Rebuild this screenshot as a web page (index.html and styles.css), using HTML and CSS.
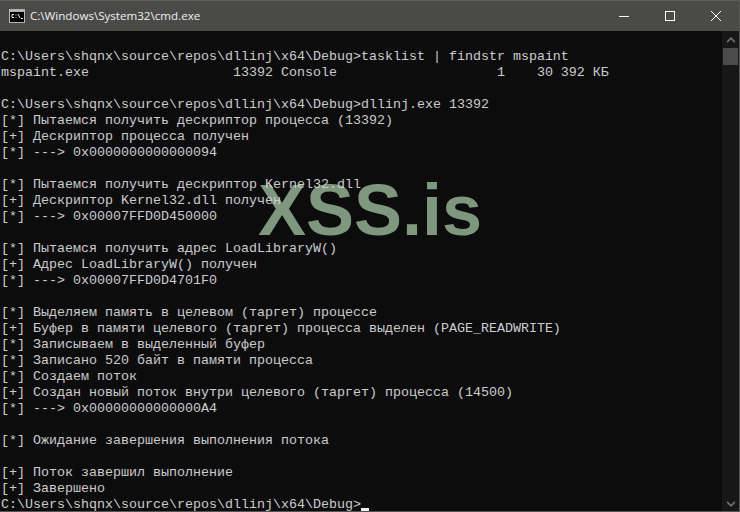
FILE: index.html
```html
<!DOCTYPE html>
<html lang="ru">
<head>
<meta charset="utf-8">
<title>cmd.exe</title>
<link rel="stylesheet" href="styles.css">
</head>
<body>
<div class="window">
  <header class="titlebar">
    <svg class="app-icon" width="16" height="14" viewBox="0 0 16 14"><rect width="16" height="14" fill="#b4b4b4"/><rect x="1" y="3" width="14" height="10" fill="#000"/><path d="M5 5.5H3v3h2M7 5.5v1M7 8v.8M9 5l2 4M12 9.5h2" stroke="#f0f0f0" fill="none"/></svg>
    <span class="title">C:\Windows\System32\cmd.exe</span>
    <div class="controls">
      <div class="control"><svg width="10" height="10" viewBox="0 0 10 10"><path d="M0 5.5h10" stroke="#fff"/></svg></div>
      <div class="control"><svg width="10" height="10" viewBox="0 0 10 10"><rect x=".5" y=".5" width="9" height="9" fill="none" stroke="#fff"/></svg></div>
      <div class="control"><svg width="10" height="10" viewBox="0 0 10 10"><path d="M0 0l10 10M10 0L0 10" stroke="#fff"/></svg></div>
    </div>
  </header>
  <div class="body">
<pre class="console">
C:\Users\shqnx\source\repos\dllinj\x64\Debug&gt;tasklist | findstr mspaint
mspaint.exe                  13392 Console                    1    30 392 КБ

C:\Users\shqnx\source\repos\dllinj\x64\Debug&gt;dllinj.exe 13392
[*] Пытаемся получить дескриптор процесса (13392)
[+] Дескриптор процесса получен
[*] ---&gt; 0x0000000000000094

[*] Пытаемся получить дескриптор Kernel32.dll
[+] Дескриптор Kernel32.dll получен
[*] ---&gt; 0x00007FFD0D450000

[*] Пытаемся получить адрес LoadLibraryW()
[+] Адрес LoadLibraryW() получен
[*] ---&gt; 0x00007FFD0D4701F0

[*] Выделяем память в целевом (таргет) процессе
[+] Буфер в памяти целевого (таргет) процесса выделен (PAGE_READWRITE)
[*] Записываем в выделенный буфер
[*] Записано 520 байт в памяти процесса
[*] Создаем поток
[+] Создан новый поток внутри целевого (таргет) процесса (14500)
[*] ---&gt; 0x00000000000000A4

[*] Ожидание завершения выполнения потока

[+] Поток завершил выполнение
[+] Завершено
C:\Users\shqnx\source\repos\dllinj\x64\Debug&gt;<span class="cursor"></span></pre>
    <aside class="scrollbar">
      <svg class="arrow" width="8" height="6" viewBox="0 0 8 6"><path d="M0 5.2l4-4 4 4" fill="none" stroke="#6a776c" stroke-width="1.7"/></svg>
      <div class="thumb"></div>
      <svg class="arrow arrow-down" width="8" height="6" viewBox="0 0 8 6"><path d="M0 .8l4 4 4-4" fill="none" stroke="#6a776c" stroke-width="1.7"/></svg>
    </aside>
  </div>
  <div class="watermark">XSS.is</div>
</div>
</body>
</html>
```
FILE: styles.css
```css
* { box-sizing: border-box; }
html, body { margin: 0; height: 100%; background: #0c0c0c; overflow: hidden; }
.window { position: relative; width: 740px; height: 512px; display: flex; flex-direction: column; background: #0c0c0c; border-right: 1px solid #555553; border-bottom: 1px solid #555553; }
.titlebar { height: 31px; flex: none; display: flex; align-items: center; background: #4a4a48; border-top: 1px solid #5c5c5a; padding: 0 0 1px 9px; }
.app-icon { flex: none; margin-right: 5px; }
.title { font: 11.6px "Open Sans", "Liberation Sans", sans-serif; color: #f0f0f0; }
.controls { margin-left: auto; display: flex; height: 100%; }
.control { width: 46px; display: flex; align-items: center; justify-content: center; }
.body { flex: 1; display: flex; min-height: 0; }
.console { position: relative; z-index: 1; flex: 1; margin: 0; padding: 18px 0 0 1px; font: 13.33px/16px "Liberation Mono", monospace; color: #cccccc; white-space: pre; overflow: hidden; }
.cursor { display: inline-block; width: 8px; height: 3px; background: #f2f2f2; vertical-align: -3px; }
.scrollbar { width: 17px; flex: none; background: #171717; display: flex; flex-direction: column; align-items: center; padding: 6px 0 4px; }
.arrow { flex: none; }
.thumb { width: 15px; height: 17px; margin-top: 5px; background: #4b4b4b; }
.arrow-down { margin-top: auto; }
.watermark { position: absolute; left: 258px; top: 165px; font: bold 72px/90px "Liberation Sans", sans-serif; color: #7f977f; }
```
